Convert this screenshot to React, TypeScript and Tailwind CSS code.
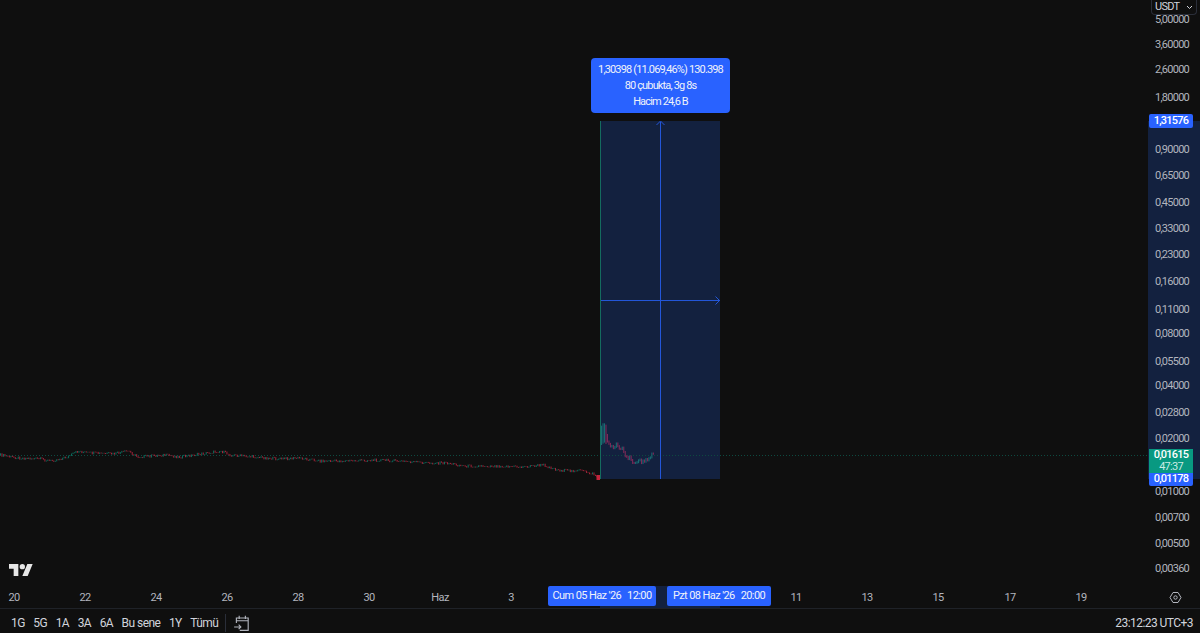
const FONT = "font-['Roboto',sans-serif]"

const prices = [
  { y: 20, label: '5,00000' },
  { y: 45, label: '3,60000' },
  { y: 70, label: '2,60000' },
  { y: 98, label: '1,80000' },
  { y: 150, label: '0,90000' },
  { y: 176, label: '0,65000' },
  { y: 203, label: '0,45000' },
  { y: 229, label: '0,33000' },
  { y: 255, label: '0,23000' },
  { y: 282, label: '0,16000' },
  { y: 310, label: '0,11000' },
  { y: 334, label: '0,08000' },
  { y: 362, label: '0,05500' },
  { y: 386, label: '0,04000' },
  { y: 413, label: '0,02800' },
  { y: 439, label: '0,02000' },
  { y: 492, label: '0,01000' },
  { y: 518, label: '0,00700' },
  { y: 544, label: '0,00500' },
  { y: 569, label: '0,00360' },
]

const days = [
  { x: 14, label: '20' },
  { x: 85, label: '22' },
  { x: 156, label: '24' },
  { x: 227, label: '26' },
  { x: 298, label: '28' },
  { x: 369, label: '30' },
  { x: 440, label: 'Haz' },
  { x: 511, label: '3' },
  { x: 796, label: '11' },
  { x: 867, label: '13' },
  { x: 938, label: '15' },
  { x: 1010, label: '17' },
  { x: 1081, label: '19' },
]

const ranges = ['1G', '5G', '1A', '3A', '6A', 'Bu sene', '1Y', 'Tümü']

// rough price track of the candles, as [x, y] on the page
const track: [number, number][] = [
  [0, 455], [10, 457], [20, 458], [40, 459], [50, 461], [67, 457], [78, 451], [87, 453],
  [113, 454], [128, 451], [137, 457], [163, 455], [180, 457], [200, 454], [220, 451], [230, 455],
  [267, 458], [277, 459], [300, 458], [320, 461], [343, 461], [380, 460], [427, 463], [447, 463],
  [463, 466], [500, 466], [520, 467], [543, 465], [557, 470], [570, 471], [577, 470], [593, 474], [597, 477],
]

const inside: [number, number][] = [
  [601, 436], [604, 432], [607, 442], [610, 447], [615, 444], [618, 446], [623, 452], [630, 459],
  [637, 463], [643, 460], [648, 458], [652, 455],
]

function yAt(points: [number, number][], x: number) {
  for (let i = 1; i < points.length; i++) {
    const [x0, y0] = points[i - 1]
    const [x1, y1] = points[i]
    if (x <= x1) return y0 + ((y1 - y0) * (x - x0)) / (x1 - x0)
  }
  return points[points.length - 1][1]
}

function noise(i: number) {
  const v = Math.sin(i * 12.9898) * 43758.5453
  return v - Math.floor(v)
}

function Candles() {
  const bars = []
  let prev = yAt(track, 0)
  for (let i = 0; i * 1.48 < 597; i++) {
    const x = i * 1.48
    const y = yAt(track, x) + (noise(i) - 0.5) * 2.8
    const up = y < prev
    bars.push(
      <rect key={i} x={x} y={Math.min(y, prev) - 0.3} width={1} height={Math.abs(y - prev) + 0.6} fill={up ? '#0b6e5f' : '#a3243a'} />,
    )
    prev = y
  }
  let last = yAt(inside, 601)
  for (let i = 0; 601 + i * 1.48 < 653; i++) {
    const x = 601 + i * 1.48
    const y = yAt(inside, x) + (noise(i + 900) - 0.5) * 6
    const up = i < 3 || y < last
    const spread = i < 4 ? 9 : 1
    bars.push(
      <rect
        key={`m${i}`}
        x={x}
        y={Math.min(y, last) - spread}
        width={1.1}
        height={Math.abs(y - last) + spread * 2}
        fill={up ? '#186a72' : '#7d2a58'}
      />,
    )
    last = y
  }
  return <>{bars}</>
}

function TvLogo() {
  return (
    <svg width="24" height="12" viewBox="0 0 36 18" fill="#e6e6e6">
      <path d="M14 18H7V7H0V0h14v18zM28 18h-8L27.500 0h8L28 18z" />
      <circle cx="20" cy="4" r="4" />
    </svg>
  )
}

function Measure() {
  return (
    <svg className="absolute inset-0" width="1148" height="586" fill="none">
      <rect x="600" y="121" width="120" height="358" fill="#13213f" />
      <line x1="0" y1="455.5" x2="1148" y2="455.5" stroke="#0d4a40" strokeDasharray="1 2" />
      <Candles />
      <rect x="596.500" y="475" width="3.500" height="5" fill="#c2253c" />
      <line x1="600.5" y1="121" x2="600.5" y2="479" stroke="#146b5e" />
      <line x1="660.5" y1="122" x2="660.5" y2="479" stroke="#2356d8" />
      <line x1="601" y1="300.5" x2="720" y2="300.5" stroke="#2356d8" />
      <path d="M656.500 125 660.500 121 664.500 125" stroke="#2356d8" />
      <path d="M715.500 296.500 719.500 300.500 715.500 304.500" stroke="#2356d8" />
    </svg>
  )
}

export default function App() {
  return (
    <div className={`flex h-[633px] w-[1200px] flex-col overflow-hidden whitespace-nowrap bg-[#0f0f0f] ${FONT}`}>
      {/* Chart + price scale */}
      <div className="flex h-[586px]">
        <div className="relative w-[1148px]">
          <Measure />
          <div className="absolute left-[591px] top-[58px] flex h-[55px] w-[139px] flex-col items-center justify-center rounded bg-[#2962ff] text-[11px] leading-[16px] tracking-[-0.85px] text-[#f0f3fa]">
            <span>1,30398 (11.069,46%) 130.398</span>
            <span>80 çubukta, 3g 8s</span>
            <span>Hacim 24,6 B</span>
          </div>
          <div className="absolute bottom-[10px] left-[9px] flex">
            <TvLogo />
          </div>
        </div>

        <div className="relative w-[52px] text-[11px] tracking-[-0.75px] text-[#b2b5be]">
          <div className="absolute left-0 right-0 top-[121px] h-[358px] bg-[#13213f]" />
          {prices.map(p => (
            <span key={p.label} className="absolute left-[7px] -translate-y-1/2 leading-[12px]" style={{ top: p.y }}>
              {p.label}
            </span>
          ))}
          <div className="absolute left-[3px] top-0 flex h-[15px] w-[46px] items-center justify-between rounded-b border border-t-0 border-[#2a2e39] bg-[#0f0f0f] pl-[3px] pr-[3px] text-[#d1d4dc]">
            <span>USDT</span>
            <svg width="7" height="5" viewBox="0 0 7 5" fill="none" stroke="#d1d4dc">
              <path d="M1 1l2.500 2.500L6 1" />
            </svg>
          </div>
          <div className="absolute left-[1px] top-[114px] flex h-[14px] w-[44px] items-center justify-center rounded-[2px] bg-[#2962ff] font-medium text-white">
            1,31576
          </div>
          <div className="absolute left-[1px] top-[449px] flex h-[24px] w-[44px] flex-col items-center justify-center bg-[#089981] leading-[12px] text-white">
            <span className="font-medium">0,01615</span>
            <span className="text-[#c9ebe4]">47:37</span>
          </div>
          <div className="absolute left-[1px] top-[473px] flex h-[13px] w-[44px] items-center justify-center rounded-b-[2px] bg-[#2962ff] font-medium text-white">
            0,01178
          </div>
        </div>
      </div>

      {/* Time scale */}
      <div className="relative h-[23px] border-b border-[#2a2e39]/60 text-[11px] tracking-[-0.6px] text-[#b2b5be]">
        <div className="absolute left-[600px] top-0 h-[22px] w-[120px] bg-[#13213f]" />
        {days.map(d => (
          <span key={d.label} className="absolute top-[4px] -translate-x-1/2 leading-[16px]" style={{ left: d.x }}>
            {d.label}
          </span>
        ))}
        <div className="absolute left-[548px] top-0 flex h-[20px] w-[108px] items-center justify-center gap-[6px] rounded-[2px] bg-[#2962ff] pt-px text-[#f0f3fa]">
          <span>Cum 05 Haz '26</span>
          <span>12:00</span>
        </div>
        <div className="absolute left-[667px] top-0 flex h-[20px] w-[104px] items-center justify-center gap-[6px] rounded-[2px] bg-[#2962ff] pt-px text-[#f0f3fa]">
          <span>Pzt 08 Haz '26</span>
          <span>20:00</span>
        </div>
        <svg className="absolute left-[1169px] top-[5px]" width="13" height="13" viewBox="0 0 13 13" fill="none" stroke="#b2b5be">
          <path d="M4 1.500h5l3 5-3 5H4l-3-5z" />
          <circle cx="6.500" cy="6.500" r="1.700" />
        </svg>
      </div>

      {/* Bottom toolbar */}
      <div className="flex h-[24px] items-center pl-[11px] pr-[7px] pt-[3px] text-[12px] tracking-[-0.55px] text-[#d1d4dc]">
        <div className="flex gap-[8.5px]">
          {ranges.map(r => (
            <span key={r}>{r}</span>
          ))}
        </div>
        <div className="ml-[7px] h-[18px] w-px bg-[#2a2e39]" />
        <svg className="ml-[7px]" width="18" height="18" viewBox="0 0 16 16" fill="none" stroke="#b2b5be">
          <path d="M3 8V3.500h10.500v11H6M1 11.500h6M5 9.500l2 2-2 2M3 6h10.500M5.500 1.500v3M11 1.500v3" />
        </svg>
        <span className="ml-auto text-[#d1d4dc]">23:12:23 UTC+3</span>
      </div>
    </div>
  )
}
